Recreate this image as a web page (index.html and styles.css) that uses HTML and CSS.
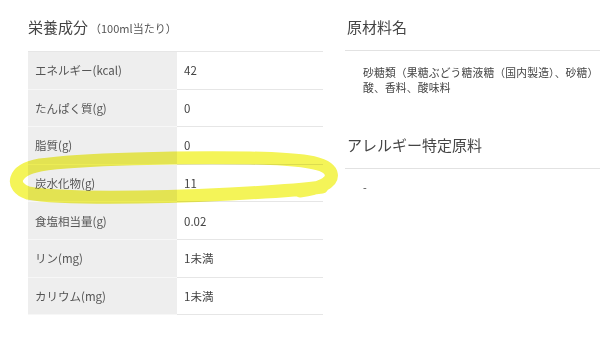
FILE: index.html
```html
<!DOCTYPE html>
<html lang="ja">
<head>
  <meta charset="UTF-8">
  <title>栄養成分・原材料</title>
  <link rel="stylesheet" href="styles.css">
</head>
<body>
<div class="page">
  <section class="nutrition">
    <h2 class="title">栄養成分<span class="unit">（100ml当たり）</span></h2>
    <table class="facts">
      <tbody>
        <tr><th>エネルギー(kcal)</th><td>42</td></tr>
        <tr><th>たんぱく質(g)</th><td>0</td></tr>
        <tr><th>脂質(g)</th><td>0</td></tr>
        <tr><th>炭水化物(g)</th><td>11</td></tr>
        <tr><th>食塩相当量(g)</th><td>0.02</td></tr>
        <tr><th>リン(mg)</th><td>1未満</td></tr>
        <tr><th>カリウム(mg)</th><td>1未満</td></tr>
      </tbody>
    </table>
  </section>

  <section class="details">
    <div class="block">
      <h2 class="title line">原材料名</h2>
      <p class="text">砂糖類（果糖ぶどう糖液糖（国内製造）、砂糖）<br>酸、香料、酸味料</p>
    </div>
    <div class="block allergy">
      <h2 class="title line">アレルギー特定原料</h2>
      <p class="text">-</p>
    </div>
  </section>

  <!-- marker scribble around the carbohydrate row -->
  <svg class="marker" width="340" height="60" viewBox="0 0 340 60">
    <path d="M300 44 C318 42 334 36 331 26 C327 15 300 12 250 11 C180 10 80 12 40 18 C12 23 10 40 28 46 C60 52 150 51 230 47 C270 45 300 43 322 40"
          fill="none" stroke="#f4f458" stroke-width="13" stroke-linecap="round" stroke-linejoin="round"/>
  </svg>
</div>
</body>
</html>
```

FILE: styles.css
```css
html, body {
  margin: 0;
  background: #fff;
  overflow: hidden;
}
body {
  font-family: "Noto Sans CJK JP", "Noto Sans", sans-serif;
  color: #444;
}
.page {
  position: relative;
  display: flex;
  gap: 22px;
  padding-left: 28px;
}
.title {
  margin: 0;
  padding: 17px 0 13px;
  font-size: 15px;
  font-weight: normal;
  line-height: 20px;
  color: #444;
}
.unit {
  margin-left: 2px;
  font-size: 11px;
  color: #555;
}
.nutrition {
  width: 295px;
  flex: none;
}
.facts {
  width: 100%;
  border-collapse: collapse;
  border-top: 1px solid #e6e6e6;
  font-size: 11.5px;
}
.facts th, .facts td {
  height: 37.6px;
  box-sizing: border-box;
  padding: 0 7px;
  text-align: left;
  font-weight: normal;
}
.facts th {
  width: 149px;
  background: #eeeeee;
  color: #555;
  border-bottom: 1px solid #f7f7f7;
}
.facts td {
  border-bottom: 1px solid #e6e6e6;
  color: #444;
}
.details {
  flex: 1;
}
.line {
  padding-left: 2px;
  border-bottom: 1px solid #e2e2e2;
}
.text {
  margin: 14px 0 0;
  padding-left: 18px;
  font-size: 10.8px;
  letter-spacing: 0.15px;
  line-height: 15px;
  color: #444;
  white-space: nowrap;
}
.allergy {
  margin-top: 23px;
}
.allergy .text {
  margin-top: 11px;
}
.marker {
  position: absolute;
  left: 0;
  top: 147px;
  mix-blend-mode: multiply;
}
```
